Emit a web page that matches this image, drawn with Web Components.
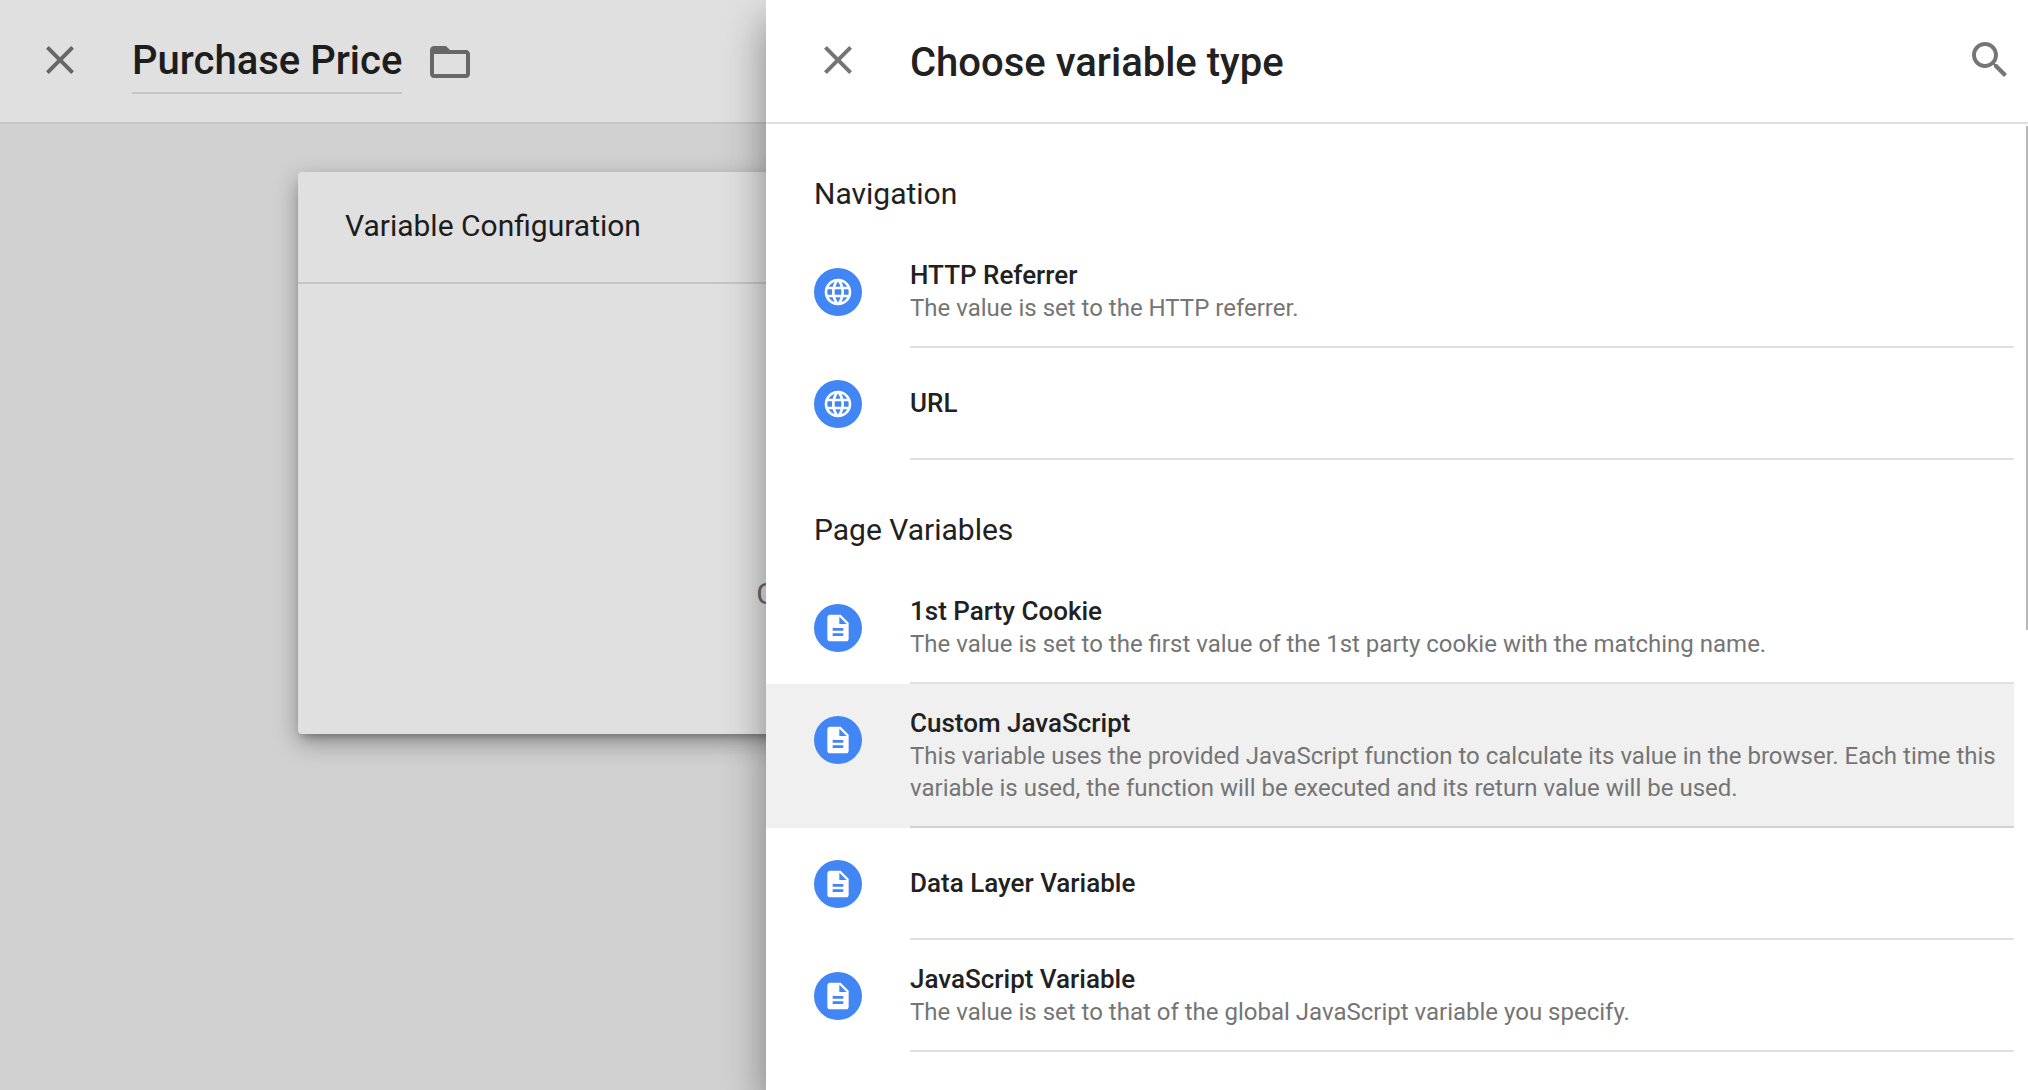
<!DOCTYPE html>
<html lang="en">
<head>
<meta charset="utf-8">
<meta name="viewport" content="width=device-width, initial-scale=1">
<title>Variable editor</title>
<style>
  html, body { margin: 0; height: 100%; }
  body {
    font-family: Roboto, "Open Sans", sans-serif;
    color: #212121;
    overflow: hidden;
  }
</style>
</head>
<body>
<gtm-app></gtm-app>
<script>
const define = (name, html, setup) => {
  const template = document.createElement('template');
  template.innerHTML = html;
  customElements.define(name, class extends HTMLElement {
    connectedCallback() {
      if (this.shadowRoot) return;
      const content = template.content.cloneNode(true);
      // Attributes are filled in before the nested elements get connected.
      if (setup) setup(this, content);
      this.attachShadow({ mode: 'open' }).append(content);
    }
  });
};

const icons = {
  close: 'M19 6.41L17.59 5 12 10.59 6.41 5 5 6.41 10.59 12 5 17.59 6.41 19 12 13.41 17.59 19 19 17.59 13.41 12z',
  folder: 'M20 6h-8l-2-2H4c-1.1 0-1.99.9-1.99 2L2 18c0 1.1.9 2 2 2h16c1.1 0 2-.9 2-2V8c0-1.1-.9-2-2-2zm0 12H4V8h16v10z',
  search: 'M15.5 14h-.79l-.28-.27C15.41 12.59 16 11.11 16 9.5 16 5.91 13.09 3 9.5 3S3 5.91 3 9.5 5.91 16 9.5 16c1.61 0 3.09-.59 4.23-1.57l.27.28v.79l5 4.99L20.49 19l-4.99-5zm-6 0C7.01 14 5 11.99 5 9.5S7.01 5 9.5 5 14 7.01 14 9.5 11.99 14 9.5 14z',
  globe: 'M11.99 2C6.47 2 2 6.48 2 12s4.47 10 9.99 10C17.52 22 22 17.52 22 12S17.52 2 11.99 2zm6.93 6h-2.95c-.32-1.25-.78-2.45-1.38-3.56 1.84.63 3.37 1.91 4.33 3.56zM12 4.04c.83 1.2 1.48 2.53 1.91 3.96h-3.82c.43-1.43 1.08-2.76 1.91-3.96zM4.26 14C4.1 13.36 4 12.69 4 12s.1-1.36.26-2h3.38c-.08.66-.14 1.32-.14 2 0 .68.06 1.34.14 2H4.26zm.82 2h2.95c.32 1.25.78 2.45 1.38 3.56-1.84-.63-3.37-1.9-4.33-3.56zm2.95-8H5.08c.96-1.66 2.49-2.93 4.33-3.56C8.81 5.55 8.35 6.75 8.03 8zM12 19.96c-.83-1.2-1.48-2.53-1.91-3.96h3.82c-.43 1.43-1.08 2.76-1.91 3.96zM14.34 14H9.66c-.09-.66-.16-1.32-.16-2 0-.68.07-1.35.16-2h4.68c.09.65.16 1.32.16 2 0 .68-.07 1.34-.16 2zm.25 5.56c.6-1.11 1.06-2.31 1.38-3.56h2.95c-.96 1.65-2.49 2.93-4.33 3.56zM16.36 14c.08-.66.14-1.32.14-2 0-.68-.06-1.34-.14-2h3.38c.16.64.26 1.31.26 2s-.1 1.36-.26 2h-3.38z',
  page: 'M14 2H6c-1.1 0-1.99.9-1.99 2L4 20c0 1.1.89 2 1.99 2H18c1.1 0 2-.9 2-2V8l-6-6zm2 16H8v-2h8v2zm0-4H8v-2h8v2zm-3-5V3.5L18.5 9H13z'
};

define('gtm-icon', `
  <style>
    :host { display: block; width: 48px; height: 48px; }
    svg { display: block; width: 100%; height: 100%; fill: currentColor; }
  </style>
  <svg viewBox="0 0 24 24" aria-hidden="true"><path/></svg>
`, (host, root) => {
  root.querySelector('path').setAttribute('d', icons[host.getAttribute('name')]);
});

define('icon-button', `
  <style>
    :host { display: block; flex: none; color: #757575; }
    button { display: block; padding: 0; border: 0; background: none; color: inherit; cursor: pointer; }
  </style>
  <button type="button"><gtm-icon></gtm-icon></button>
`, (host, root) => {
  root.querySelector('button').setAttribute('aria-label', host.getAttribute('label'));
  root.querySelector('gtm-icon').setAttribute('name', host.getAttribute('icon'));
});

/* Row of the type list: round badge, name, optional description */
define('variable-type', `
  <style>
    :host { display: block; }
    button {
      display: flex; align-items: flex-start; gap: 48px;
      width: 100%; padding: 0 0 0 48px; border: 0;
      background: none; color: inherit; font: inherit; text-align: left; cursor: pointer;
    }
    :host([active]) button { background: #f0f0f0; }
    .badge {
      flex: none; display: grid; place-items: center;
      width: 48px; height: 48px; margin-top: 32px;
      border-radius: 50%; background: #4285f4; color: #fff;
    }
    .badge gtm-icon { width: 32px; height: 32px; }
    .text {
      flex: 1; box-sizing: border-box; min-height: 112px;
      display: flex; flex-direction: column; justify-content: center;
      padding: 22px 16px 22px 0;
      border-bottom: 2px solid rgba(0, 0, 0, .12);
    }
    .name { font-size: 26px; line-height: 34px; font-weight: 500; }
    .about { font-size: 24px; line-height: 32px; color: #757575; }
  </style>
  <button type="button">
    <span class="badge"><gtm-icon></gtm-icon></span>
    <span class="text">
      <span class="name"></span>
      <span class="about"><slot></slot></span>
    </span>
  </button>
`, (host, root) => {
  root.querySelector('gtm-icon').setAttribute('name', host.getAttribute('icon'));
  root.querySelector('.name').textContent = host.getAttribute('name');
  if (!host.textContent.trim()) root.querySelector('.about').remove();
});

define('type-section', `
  <style>
    :host { display: block; }
    h2 { margin: 0; padding: 50px 48px 22px; font-size: 30px; line-height: 40px; font-weight: 400; }
  </style>
  <section><h2></h2><slot></slot></section>
`, (host, root) => {
  root.querySelector('h2').textContent = host.getAttribute('heading');
});

define('type-panel', `
  <style>
    :host { display: flex; flex-direction: column; background: #fff; box-shadow: 0 20px 40px rgba(0, 0, 0, .4); }
    header {
      flex: none; box-sizing: border-box; height: 124px;
      display: flex; align-items: flex-start; gap: 48px;
      padding: 36px 14px 0 48px; border-bottom: 2px solid #e0e0e0;
    }
    h1 { flex: 1; margin: 0; font-size: 40px; line-height: 54px; font-weight: 500; }
    .list { flex: 1; min-height: 0; overflow: hidden; position: relative; padding-right: 14px; }
    .thumb { position: absolute; top: 2px; right: 0; width: 2px; height: 504px; background: #b8b8b8; }
  </style>
  <header>
    <icon-button icon="close" label="Close panel"></icon-button>
    <h1>Choose variable type</h1>
    <icon-button icon="search" label="Search"></icon-button>
  </header>
  <div class="list"><slot></slot><div class="thumb"></div></div>
`);

define('config-card', `
  <style>
    :host {
      display: flex; flex-direction: column; min-height: 562px;
      background: #e0e0e0; border-radius: 4px;
      box-shadow: 0 8px 24px rgba(0, 0, 0, .34), 0 6px 8px -4px rgba(0, 0, 0, .28);
    }
    h2 {
      margin: 0; padding: 34px 47px 36px; border-bottom: 2px solid #c5c5c5;
      font-size: 30px; line-height: 40px; font-weight: 400; color: #1d1d1d;
    }
    .body { flex: 1; display: flex; align-items: flex-end; padding: 0 0 120px 32%; }
    p { margin: 0; font-size: 30px; line-height: 40px; color: #676767; }
  </style>
  <h2>Variable Configuration</h2>
  <div class="body"><p><slot></slot></p></div>
`);

define('variable-editor', `
  <style>
    :host { display: block; background: #d1d1d1; }
    header {
      box-sizing: border-box; height: 124px;
      display: flex; align-items: flex-start;
      padding: 36px 36px 0; background: #e0e0e0; border-bottom: 2px solid #c5c5c5;
    }
    icon-button { color: #676767; }
    input {
      field-sizing: content; box-sizing: content-box; height: 50px;
      margin: 0 24px 0 48px; padding: 0 0 6px; border: 0; border-bottom: 2px solid #c5c5c5;
      background: none; outline: none; color: #1d1d1d;
      font: 500 40px/50px Roboto, "Open Sans", sans-serif;
    }
    .folder { padding-top: 2px; }
    main { max-width: 1432px; margin: 48px auto 0; }
  </style>
  <header>
    <icon-button icon="close" label="Close editor"></icon-button>
    <input type="text" aria-label="Variable name" value="Purchase Price">
    <icon-button class="folder" icon="folder" label="Move to folder"></icon-button>
  </header>
  <main><config-card>C</config-card></main>
`);

define('gtm-app', `
  <style>
    :host { display: grid; grid-template-columns: 766px minmax(0, 1fr); height: 100vh; overflow: hidden; }
    variable-editor { grid-area: 1 / 1 / 2 / 3; }
    type-panel { grid-area: 1 / 2; min-height: 0; z-index: 1; }
  </style>
  <variable-editor></variable-editor>
  <type-panel>
    <type-section heading="Navigation">
      <variable-type icon="globe" name="HTTP Referrer">The value is set to the HTTP referrer.</variable-type>
      <variable-type icon="globe" name="URL"></variable-type>
    </type-section>
    <type-section heading="Page Variables">
      <variable-type icon="page" name="1st Party Cookie">The value is set to the first value of the 1st party cookie with the matching name.</variable-type>
      <variable-type icon="page" name="Custom JavaScript" active>This variable uses the provided JavaScript function to calculate its value in the browser. Each time this variable is used, the function will be executed and its return value will be used.</variable-type>
      <variable-type icon="page" name="Data Layer Variable"></variable-type>
      <variable-type icon="page" name="JavaScript Variable">The value is set to that of the global JavaScript variable you specify.</variable-type>
    </type-section>
  </type-panel>
`);
</script>
</body>
</html>
